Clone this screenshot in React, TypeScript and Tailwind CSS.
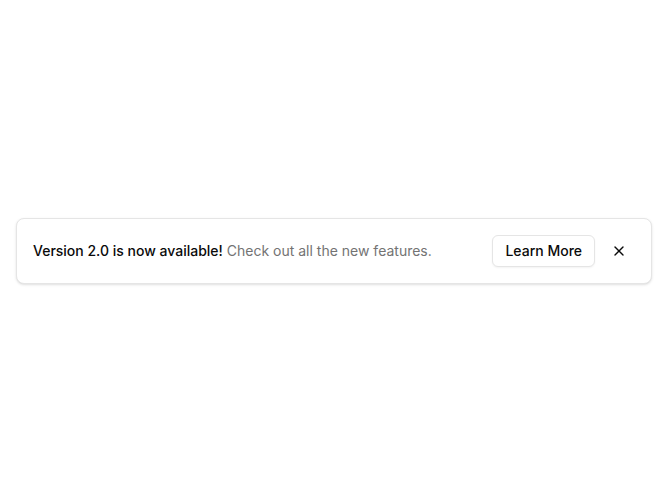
import React from "react";

export default function App() {
  return (
    <div className="min-h-screen bg-white flex items-center px-4" style={{ fontFamily: "Inter, 'Noto Sans', sans-serif" }}>
      <div className="w-full flex items-center justify-between gap-4 rounded-lg border border-[#e5e5e5] bg-white p-4 shadow-sm">
        <p className="text-sm text-[#0a0a0a]">
          <span className="font-medium">Version 2.0 is now available!</span>{" "}
          <span className="text-[#737373]">Check out all the new features.</span>
        </p>
        <div className="flex items-center gap-2">
          <button className="h-8 px-3 rounded-md border border-[#e5e5e5] bg-white text-sm font-medium text-[#0a0a0a] shadow-xs">
            Learn More
          </button>
          <button className="h-8 w-8 flex items-center justify-center rounded-md text-[#0a0a0a]" aria-label="Close">
            <svg width="16" height="16" viewBox="0 0 24 24" fill="none" stroke="currentColor" strokeWidth="2" strokeLinecap="round" strokeLinejoin="round">
              <path d="M18 6 6 18" />
              <path d="m6 6 12 12" />
            </svg>
          </button>
        </div>
      </div>
    </div>
  );
}
